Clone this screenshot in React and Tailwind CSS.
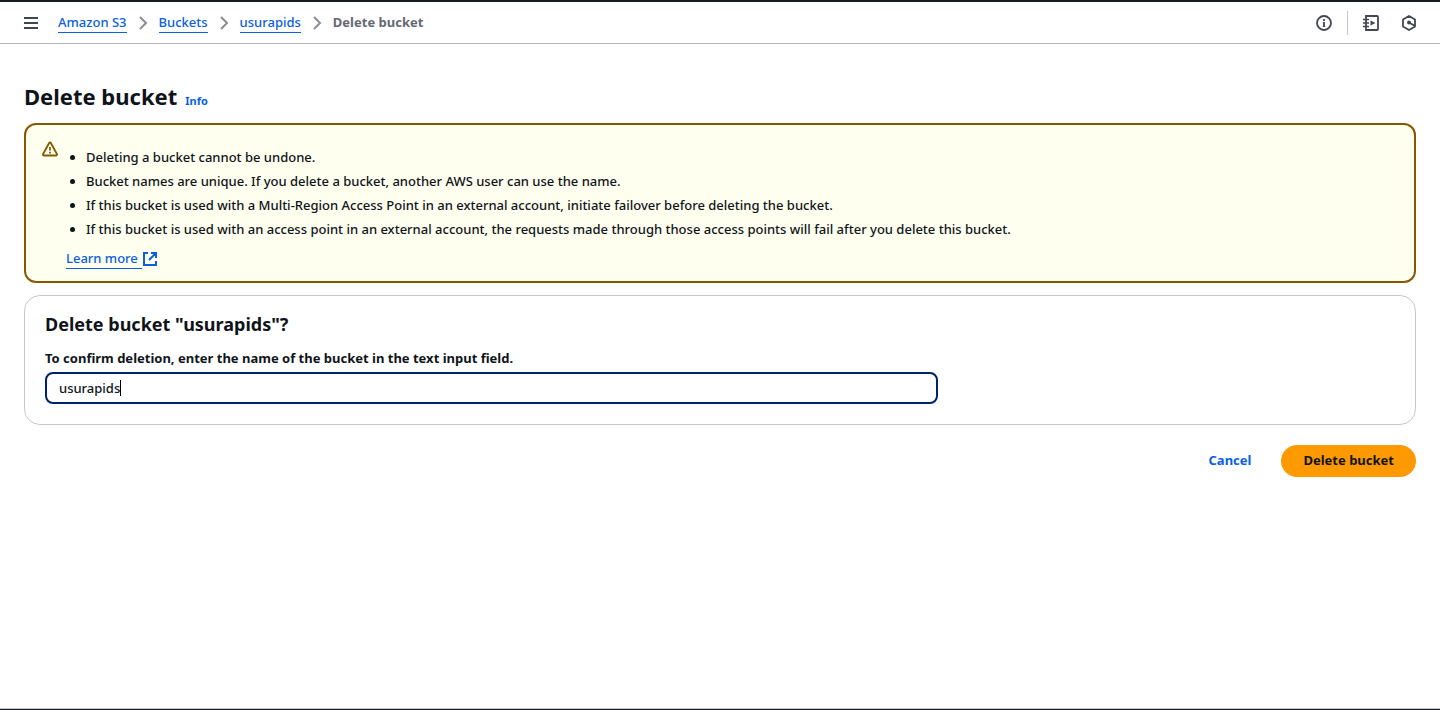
import { useState } from "react";

const warnings = [
  "Deleting a bucket cannot be undone.",
  "Bucket names are unique. If you delete a bucket, another AWS user can use the name.",
  "If this bucket is used with a Multi-Region Access Point in an external account, initiate failover before deleting the bucket.",
  "If this bucket is used with an access point in an external account, the requests made through those access points will fail after you delete this bucket.",
];

const crumbs = ["Amazon S3", "Buckets", "usurapids"];

function MenuIcon() {
  return (
    <svg viewBox="0 0 16 16" className="size-4" fill="none" stroke="currentColor" strokeWidth="2" aria-hidden="true">
      <path d="M1 3h14M1 8h14M1 13h14" />
    </svg>
  );
}

function ChevronIcon() {
  return (
    <svg viewBox="0 0 16 16" className="size-4 text-[#8c8c94]" fill="none" stroke="currentColor" strokeWidth="2" aria-hidden="true">
      <path d="m5 2 6 6-6 6" />
    </svg>
  );
}

function InfoIcon() {
  return (
    <svg viewBox="0 0 16 16" className="size-4" fill="none" stroke="currentColor" aria-hidden="true">
      <circle cx="8" cy="8" r="7" strokeWidth="1.8" />
      <path d="M8 4v2M8 12V7" strokeWidth="1.8" />
      <path d="M6.800 7.500H8M6.800 11.500h2.400" strokeWidth="1" />
    </svg>
  );
}

function TutorialIcon() {
  return (
    <svg viewBox="0 0 16 16" className="size-4" fill="none" stroke="currentColor" aria-hidden="true">
      <path d="M3 1h11a1 1 0 0 1 1 1v12a1 1 0 0 1-1 1H3z" strokeWidth="1.8" />
      <path d="M0 4.500h6M0 8h6M0 11.500h6" strokeWidth="1.500" />
      <path d="M7.500 5.500v5L12.500 8z" fill="currentColor" stroke="none" />
    </svg>
  );
}

function HexagonIcon() {
  return (
    <svg viewBox="0 0 16 16" className="size-4" fill="none" stroke="currentColor" strokeWidth="1.8" aria-hidden="true">
      <path d="M8 1l6 3.500v7L8 15l-6-3.500v-7z" strokeLinejoin="round" />
      <path d="m8 7.500 6 3.500" />
      <circle cx="8" cy="7.500" r="2" fill="currentColor" stroke="none" />
    </svg>
  );
}

function WarningIcon() {
  return (
    <svg viewBox="0 0 16 16" className="size-4" fill="none" stroke="currentColor" strokeWidth="1.8" strokeLinejoin="round" aria-hidden="true">
      <path d="M7.300 1.800 1.100 13a1 1 0 0 0 .9 1.500h12a1 1 0 0 0 .9-1.500L8.700 1.800a.8.8 0 0 0-1.400 0z" />
      <path d="M8 6v3.500M8 10.800v1.700" />
    </svg>
  );
}

function ExternalIcon() {
  return (
    <svg viewBox="0 0 16 16" className="size-4" fill="none" stroke="currentColor" strokeWidth="2" aria-hidden="true">
      <path d="M6 2H2v12h12v-4M9 2h5v5M14 2 7 9" />
    </svg>
  );
}

export default function App() {
  const [name, setName] = useState("usurapids");

  return (
    <div className="flex min-h-screen flex-col border-t-2 border-b border-t-[#161d26] border-b-[#161d26] bg-white font-['Noto_Sans',sans-serif] text-[13px] font-medium text-[#0f141a]">
      <header className="flex h-[42px] items-center justify-between border-b border-[#b4b4bb] px-[23px]">
        <div className="flex items-center">
          <button type="button" aria-label="Open navigation" className="mr-[19px] text-[#424650]">
            <MenuIcon />
          </button>
          <nav aria-label="Breadcrumbs">
            <ol className="flex items-center gap-2">
              {crumbs.map((crumb) => (
                <li key={crumb} className="flex items-center gap-2">
                  <a href="#" className="border-b border-[#0a60e2] leading-5 text-[#0a60e2]">{crumb}</a>
                  <ChevronIcon />
                </li>
              ))}
              <li aria-current="page" className="font-bold text-[#656871]">Delete bucket</li>
            </ol>
          </nav>
        </div>
        <div className="flex items-center text-[#424650]">
          <button type="button" aria-label="Info"><InfoIcon /></button>
          <span className="mx-[15px] h-6 w-px bg-[#c6c6cd]" />
          <button type="button" aria-label="Tutorials"><TutorialIcon /></button>
          <button type="button" aria-label="Diagnostics" className="ml-[22px]"><HexagonIcon /></button>
        </div>
      </header>

      <main className="flex-1 px-6 pt-9">
        <div className="flex items-baseline gap-2">
          <h1 className="text-[22px] leading-8 font-bold">Delete bucket</h1>
          <a href="#" className="text-[11px] font-bold text-[#0a60e2]">Info</a>
        </div>

        <section aria-label="Warning" className="mt-[11px] flex gap-2 rounded-xl border-2 border-[#855900] bg-[#fffff0] px-4 pt-4 pb-3">
          <span className="text-[#855900]"><WarningIcon /></span>
          <div>
            <ul className="mt-1 list-disc pl-5 leading-6">
              {warnings.map((warning) => (
                <li key={warning}>{warning}</li>
              ))}
            </ul>
            <a href="#" className="mt-[7px] flex w-fit items-center text-[#0a60e2]">
              <span className="border-b border-[#0a60e2] pr-1 leading-5">Learn more</span>
              <ExternalIcon />
            </a>
          </div>
        </section>

        <section className="mt-3 rounded-2xl border border-[#c6c6cd] px-5 pt-4 pb-5">
          <h2 className="text-lg leading-6 font-bold">Delete bucket &quot;{name}&quot;?</h2>
          <label htmlFor="bucket-name" className="mt-3 block leading-5 font-bold">
            To confirm deletion, enter the name of the bucket in the text input field.
          </label>
          <div className="mt-1 grid grid-cols-12 gap-5">
            <div className="relative col-span-8">
              <input
                id="bucket-name"
                type="text"
                value={name}
                onChange={(event) => setName(event.target.value)}
                className="block h-8 w-full rounded-lg border-2 border-[#00216b] bg-white px-3 caret-transparent outline-none"
              />
              <span className="absolute top-2 left-[75px] h-4 w-px bg-black" />
            </div>
          </div>
        </section>

        <div className="mt-5 flex items-center justify-end gap-[10px] font-bold">
          <button type="button" className="h-8 px-5 text-[#0a60e2]">Cancel</button>
          <button type="button" className="h-8 rounded-full bg-[#ff9900] px-[22px]">Delete bucket</button>
        </div>
      </main>
      <div className="h-px bg-[#c6c6cd]" />
    </div>
  );
}
